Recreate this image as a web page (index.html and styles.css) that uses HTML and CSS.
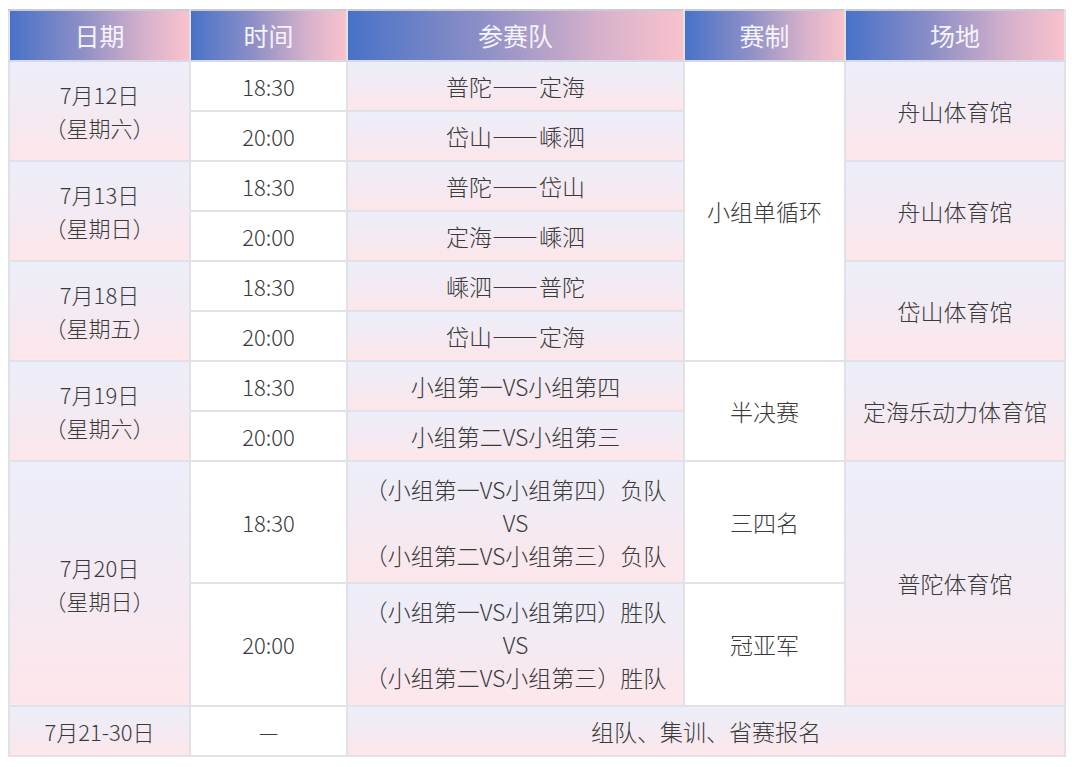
FILE: index.html
```html
<!DOCTYPE html>
<html lang="zh-CN">
<head>
<meta charset="utf-8">
<link rel="stylesheet" href="styles.css">
</head>
<body>
<table class="sched">
  <colgroup>
    <col class="c-date"><col class="c-time"><col class="c-team"><col class="c-fmt"><col class="c-venue">
  </colgroup>
  <thead>
    <tr class="r-head">
      <th>日期</th><th>时间</th><th>参赛队</th><th>赛制</th><th>场地</th>
    </tr>
  </thead>
  <tbody>
    <tr class="r-std">
      <td rowspan="2" class="g date">7月12日<br>（星期六）</td>
      <td class="w time">18:30</td>
      <td class="g">普陀<span class="dash">——</span>定海</td>
      <td rowspan="6" class="w">小组单循环</td>
      <td rowspan="2" class="g">舟山体育馆</td>
    </tr>
    <tr class="r-std">
      <td class="w time">20:00</td>
      <td class="g">岱山<span class="dash">——</span>嵊泗</td>
    </tr>
    <tr class="r-std">
      <td rowspan="2" class="g date">7月13日<br>（星期日）</td>
      <td class="w time">18:30</td>
      <td class="g">普陀<span class="dash">——</span>岱山</td>
      <td rowspan="2" class="g">舟山体育馆</td>
    </tr>
    <tr class="r-std">
      <td class="w time">20:00</td>
      <td class="g">定海<span class="dash">——</span>嵊泗</td>
    </tr>
    <tr class="r-std">
      <td rowspan="2" class="g date">7月18日<br>（星期五）</td>
      <td class="w time">18:30</td>
      <td class="g">嵊泗<span class="dash">——</span>普陀</td>
      <td rowspan="2" class="g">岱山体育馆</td>
    </tr>
    <tr class="r-std">
      <td class="w time">20:00</td>
      <td class="g">岱山<span class="dash">——</span>定海</td>
    </tr>
    <tr class="r-std">
      <td rowspan="2" class="g date">7月19日<br>（星期六）</td>
      <td class="w time">18:30</td>
      <td class="g">小组第一VS小组第四</td>
      <td rowspan="2" class="w">半决赛</td>
      <td rowspan="2" class="g">定海乐动力体育馆</td>
    </tr>
    <tr class="r-std">
      <td class="w time">20:00</td>
      <td class="g">小组第二VS小组第三</td>
    </tr>
    <tr class="r-tall">
      <td rowspan="2" class="g date">7月20日<br>（星期日）</td>
      <td class="w time">18:30</td>
      <td class="g multi">（小组第一VS小组第四）负队<br>VS<br>（小组第二VS小组第三）负队</td>
      <td class="w">三四名</td>
      <td rowspan="2" class="g">普陀体育馆</td>
    </tr>
    <tr class="r-tall2">
      <td class="w time">20:00</td>
      <td class="g multi">（小组第一VS小组第四）胜队<br>VS<br>（小组第二VS小组第三）胜队</td>
      <td class="w">冠亚军</td>
    </tr>
    <tr class="r-std">
      <td class="g date">7月21-30日</td>
      <td class="w time">—</td>
      <td colspan="3" class="g">组队、集训、省赛报名</td>
    </tr>
  </tbody>
</table>
</body>
</html>
```

FILE: styles.css
```css
html, body {
  margin: 0;
  padding: 0;
  background: #ffffff;
}
body {
  padding: 9px 8px 0 8px;
  font-family: "Noto Sans CJK SC", "Noto Sans", sans-serif;
  color: #3a3a3a;
}
.sched {
  border-collapse: collapse;
  table-layout: fixed;
  width: 1056px;
  border-left: 2px solid #8796bb;
  border-bottom: 2px solid #d6d7df;
  border-right: 2px solid #e3e3e8;
}
.c-date { width: 181px; }
.c-time { width: 157px; }
.c-team { width: 337px; }
.c-fmt { width: 161px; }
.c-venue { width: 220px; }

.sched th,
.sched td {
  border: 2px solid #e1e2e7;
  text-align: center;
  vertical-align: middle;
  padding: 0;
  font-size: 23px;
  font-weight: 300;
  line-height: 33px;
}
.sched td.date,
.sched td.time {
  font-size: 22px;
}
.dash {
  letter-spacing: 2px;
  margin-right: -1px;
}
.sched th {
  color: #f4f4fa;
  font-size: 25px;
  font-weight: 400;
  background: linear-gradient(90deg, #4872c8 0%, #8d8fc6 40%, #d6b1cb 75%, #f9c2cc 100%);
  border-top: 2px solid #c9cad6;
  border-bottom: 2px solid #d8d9e6;
}
.r-head { height: 51px; }
.r-std { height: 50px; }
.r-tall { height: 122px; }
.r-tall2 { height: 123px; }

.g {
  background: linear-gradient(180deg, #eceef9 0%, #f3eaf3 50%, #fde6ea 100%);
}
.w {
  background: #ffffff;
}
.multi {
  line-height: 34px;
}
```
